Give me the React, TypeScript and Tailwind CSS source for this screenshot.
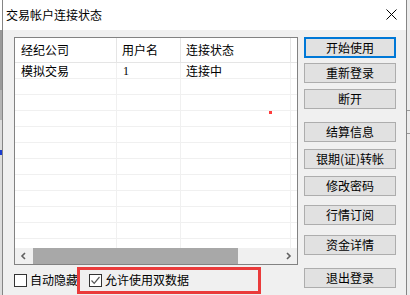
import React from "react";

const rows = [
  { broker: "模拟交易", user: "1", status: "连接中" },
];

const buttons = [
  { label: "开始使用", mt: "mt-[7px]", primary: true },
  { label: "重新登录", mt: "mt-[5px]" },
  { label: "断开", mt: "mt-[6px]" },
  { label: "结算信息", mt: "mt-[13px]" },
  { label: "银期(证)转帐", mt: "mt-[7px]" },
  { label: "修改密码", mt: "mt-[7px]" },
  { label: "行情订阅", mt: "mt-[9px]" },
  { label: "资金详情", mt: "mt-[10px]" },
  { label: "退出登录", mt: "mt-[13px]" },
];

function Checkbox({ checked, label }: { checked?: boolean; label: string }) {
  return (
    <div className="flex items-center gap-[3px]">
      <div className="w-[13px] h-[13px] border border-[#333] bg-white flex items-center justify-center">
        {checked && (
          <svg width="11" height="11" viewBox="0 0 11 11">
            <path d="M1.5 5.5 L4.2 8.3 L9.5 2" fill="none" stroke="#555" strokeWidth="1.2" />
          </svg>
        )}
      </div>
      <span className="text-[12px] leading-[14px] text-black">{label}</span>
    </div>
  );
}

export default function App() {
  const emptyRows = Array.from({ length: 11 });

  return (
    <div className="w-[410px] h-[295px] flex overflow-hidden relative font-['Noto_Sans_CJK_SC','Microsoft_YaHei',sans-serif] bg-[#f0f0f0]">
      {/* background windows peeking out */}
      <div className="w-[2px] h-full bg-[#dcdcdc] flex flex-col">
        <div className="h-[30px] bg-white" />
        <div className="h-[60px] bg-[#9a9a9a]" />
        <div className="h-[30px] bg-[#b4b4b4]" />
        <div className="h-[5px] bg-[#1a3cd0] mt-[30px]" />
      </div>

      <div className="w-[405px] h-full border-l border-r border-[#858585] flex flex-col">
        {/* title bar */}
        <div className="h-[30px] bg-white flex items-center justify-between pl-[3px] pr-[9px]">
          <span className="text-[12px] leading-[14px] text-black">交易帐户连接状态</span>
          <svg width="11" height="11" viewBox="0 0 11 11" className="mt-[-1px]">
            <path d="M0.5 0.5 L10.5 10.5 M10.5 0.5 L0.5 10.5" stroke="#000" strokeWidth="1" />
          </svg>
        </div>

        {/* body */}
        <div className="flex-1 flex bg-[#f0f0f0]">
          <div className="flex flex-col ml-[11px]">
            <div className="mt-[7px] w-[284px] h-[228px] border border-[#828282] bg-white flex flex-col relative">
              {/* header */}
              <div className="h-[25px] flex border-b border-[#e5e5e5] text-[12px] leading-[14px] text-black shrink-0">
                <div className="w-[102px] border-r border-[#e5e5e5] pl-[6px] flex items-center">经纪公司</div>
                <div className="w-[64px] border-r border-[#e5e5e5] pl-[5px] flex items-center">用户名</div>
                <div className="w-[110px] border-r border-[#e5e5e5] pl-[5px] flex items-center">连接状态</div>
              </div>

              {/* rows */}
              <div className="flex-1 overflow-hidden">
                {rows.map((r) => (
                  <div key={r.broker} className="h-[16px] flex border-b border-[#f0f0f0] text-[12px] leading-[14px] text-black">
                    <div className="w-[102px] border-r border-[#f0f0f0] pl-[6px] flex items-center">{r.broker}</div>
                    <div className="w-[64px] border-r border-[#f0f0f0] pl-[6px] flex items-center font-['Liberation_Serif',serif]">{r.user}</div>
                    <div className="w-[110px] border-r border-[#f0f0f0] pl-[5px] flex items-center">{r.status}</div>
                  </div>
                ))}
                {emptyRows.map((_, i) => (
                  <div key={i} className="h-[16px] flex border-b border-[#f0f0f0]">
                    <div className="w-[102px] border-r border-[#f0f0f0]" />
                    <div className="w-[64px] border-r border-[#f0f0f0]" />
                    <div className="w-[110px] border-r border-[#f0f0f0]" />
                  </div>
                ))}
              </div>

              {/* horizontal scrollbar */}
              <div className="h-[16px] flex bg-[#f0f0f0] shrink-0">
                <div className="w-[17px] flex items-center justify-center">
                  <svg width="7" height="8" viewBox="0 0 7 8">
                    <path d="M5 1 L2 4 L5 7" fill="none" stroke="#606060" strokeWidth="1.6" />
                  </svg>
                </div>
                <div className="w-[205px] bg-[#a8a8a8] ml-[1px]" />
                <div className="flex-1" />
                <div className="w-[17px] flex items-center justify-center">
                  <svg width="7" height="8" viewBox="0 0 7 8">
                    <path d="M2 1 L5 4 L2 7" fill="none" stroke="#606060" strokeWidth="1.6" />
                  </svg>
                </div>
              </div>

              {/* stray red pixel */}
              <div className="absolute left-[254px] top-[73px] w-[3px] h-[3px] bg-[#ff3c3c]" />
            </div>

            {/* checkboxes */}
            <div className="flex items-center mt-[8px] gap-[11px]">
              <Checkbox label="自动隐藏" />
              <Checkbox checked label="允许使用双数据" />
            </div>
          </div>

          {/* buttons */}
          <div className="flex flex-col ml-[6px] w-[92px]">
            {buttons.map((b) =>
              b.primary ? (
                <div key={b.label} className={`${b.mt} h-[21px] border-2 border-[#0078d7] bg-[#e1e1e1] flex items-center justify-center text-[12px] leading-[14px] text-black`}>
                  {b.label}
                </div>
              ) : (
                <div key={b.label} className={`${b.mt} h-[20px] border border-[#adadad] bg-[#e1e1e1] flex items-center justify-center text-[12px] leading-[14px] text-black`}>
                  {b.label}
                </div>
              )
            )}
          </div>
        </div>
      </div>

      <div className="w-[3px] h-full bg-[#ececec] flex flex-col">
        <div className="h-[110px]" />
        <div className="h-[1px] bg-[#9a9a9a]" />
        <div className="h-[22px]" />
        <div className="h-[1px] bg-[#9a9a9a]" />
      </div>

      {/* red annotation box */}
      <div className="absolute left-[77px] top-[267px] w-[184px] h-[27px] border-[3px] border-[#ea3b3b]" />
    </div>
  );
}
